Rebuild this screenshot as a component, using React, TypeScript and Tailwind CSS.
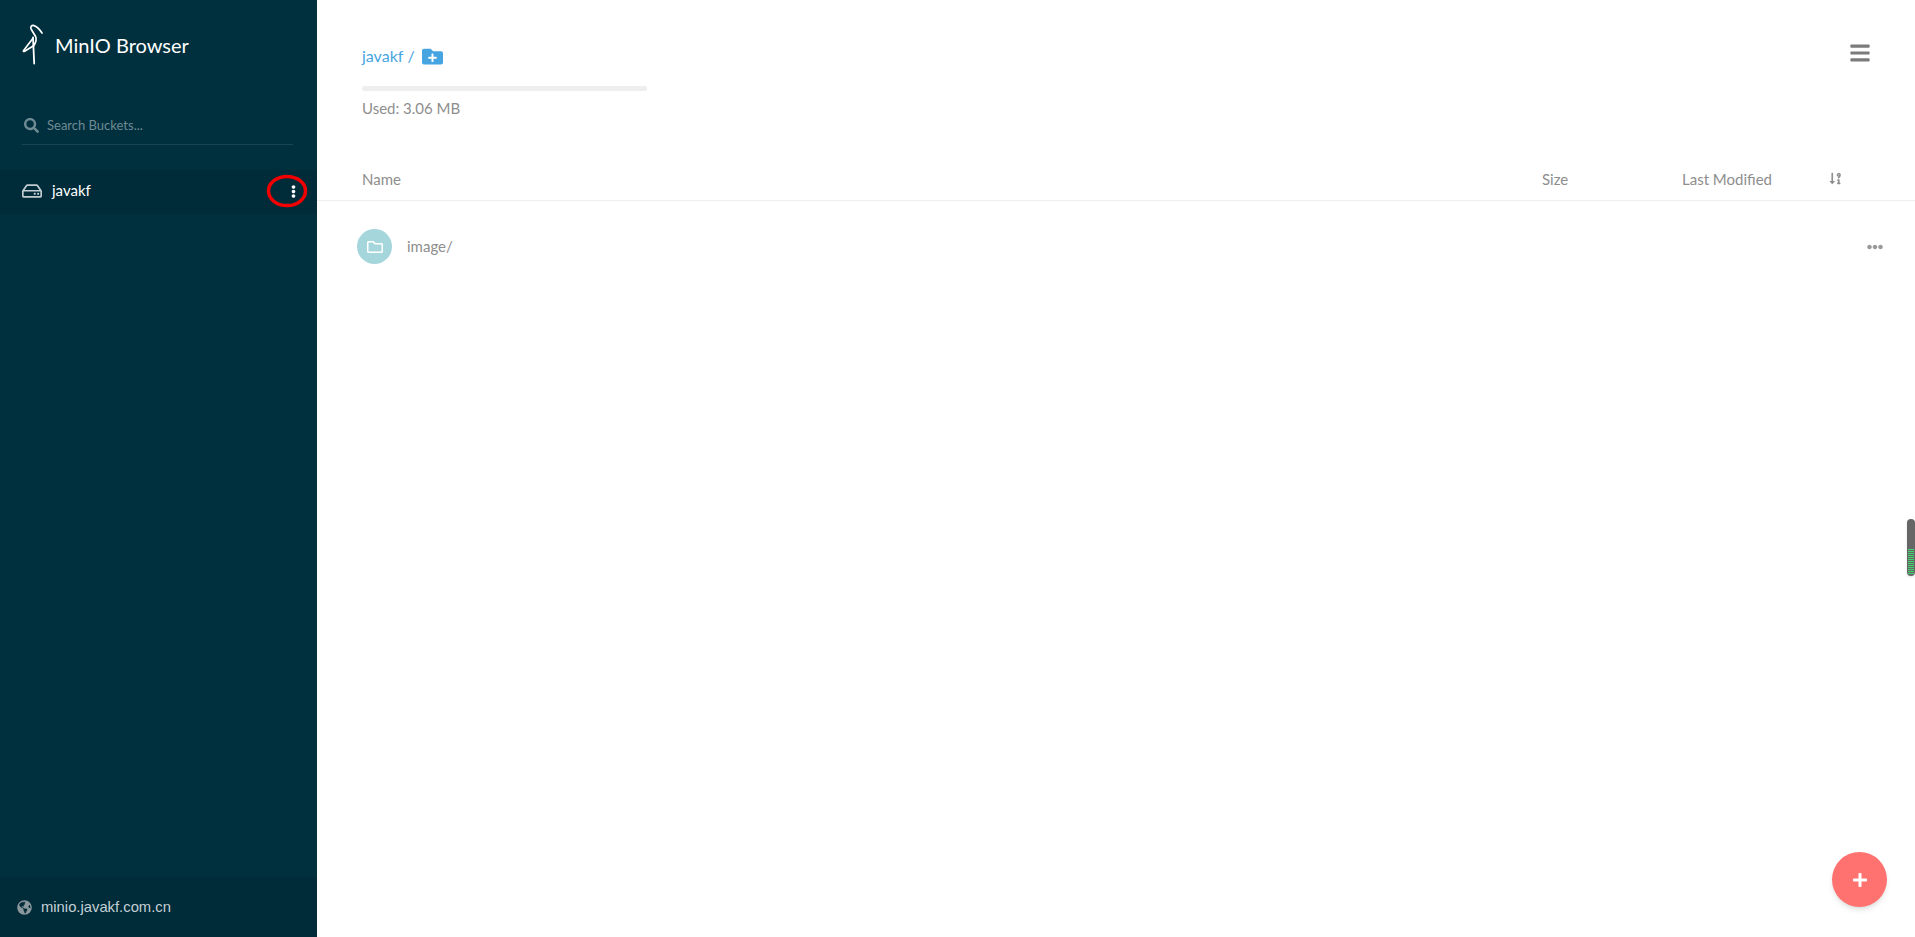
import { FaEllipsisH, FaEllipsisV, FaBars, FaFolderPlus, FaGlobeAmericas, FaPlus, FaRegFolder, FaRegHdd, FaSearch, FaSortNumericDownAlt } from 'react-icons/fa';

function Logo() {
  return (
    <svg viewBox="0 0 22 42" className="w-[22px] h-[42px]" fill="none" stroke="#fff" strokeLinecap="round" strokeLinejoin="round">
      <path d="M20 9 C18 6 15 2.5 12 1.6 C9.5 1 8 3 9.2 5.2 L13.6 12.5 C14.8 15 14.2 18 11.5 22" strokeWidth="1.7" />
      <path d="M11.2 14 L1.6 26.4 C1 27.4 1.6 27.8 2.6 27.2 L11.2 22" strokeWidth="1.7" />
      <path d="M11 13.5 L12.2 39.5" strokeWidth="1.8" />
    </svg>
  );
}

function Sidebar() {
  return (
    <aside className="w-[317px] h-full shrink-0 flex flex-col bg-[#002f3e]">
      <header className="h-[100px] pl-[22px] pt-[24px] flex items-start">
        <Logo />
        <span className="ml-[11px] mt-[8px] text-[20px] leading-[26px] text-white">MinIO Browser</span>
      </header>
      <div className="ml-[22px] mr-[24px] h-[45px] pt-[7px] flex items-center border-b border-[#1c4553]">
        <FaSearch className="ml-[2px] text-[15px] text-[#6f8b94]" />
        <span className="ml-[8px] text-[13px] text-[#6f8b94]">Search Buckets...</span>
      </div>
      <div className="mt-[25px] h-[44px] pl-[22px] pr-[17px] flex items-center bg-[#002b38] text-white">
        <FaRegHdd className="mb-[2px] text-[20px] text-[#c2cdd1]" />
        <span className="ml-[10px] mb-[3px] text-[15px]">javakf</span>
        <FaEllipsisV className="ml-auto mb-[1px] text-[13px] text-white" />
      </div>
      <footer className="mt-auto h-[60px] pl-[17px] flex items-center bg-[#002b38]">
        <FaGlobeAmericas className="text-[15px] text-[#8a979c]" />
        <span className="ml-[9px] text-[14.8px] text-[#c4d0d6] font-['Liberation_Sans',sans-serif]">minio.javakf.com.cn</span>
      </footer>
    </aside>
  );
}

function Main() {
  return (
    <main className="flex-1 h-full bg-white text-[15px] text-[#8e8e8e]">
      <div className="h-[163px] pl-[45px] pr-[44px] flex justify-between">
        <div className="w-[285px] pt-[46px]">
          <div className="flex items-center h-[20px] text-[16px] text-[#46a5e0]">
            <span>javakf</span>
            <span className="ml-[4px]">/</span>
            <FaFolderPlus className="ml-[7px] text-[21px]" />
          </div>
          <div className="mt-[20px] h-[5px] rounded-sm bg-[#eeeeee]"></div>
          <div className="mt-[6px] leading-[22px]">Used: 3.06 MB</div>
        </div>
        <FaBars className="mt-[42px] text-[22px] text-[#7b7b7b]" />
      </div>
      <div className="h-[38px] pl-[45px] flex items-start border-b border-[#eeeeee]">
        <span className="leading-[32px]">Name</span>
        <span className="ml-auto w-[140px] leading-[32px]">Size</span>
        <span className="w-[147px] leading-[32px]">Last Modified</span>
        <FaSortNumericDownAlt className="mt-[9px] mr-[73px] text-[13px]" />
      </div>
      <div className="h-[91px] pl-[40px] pr-[32px] flex items-center">
        <div className="w-[35px] h-[35px] rounded-full bg-[#a5d6dc] flex items-center justify-center">
          <FaRegFolder className="text-[16px] text-white" />
        </div>
        <span className="ml-[15px]">image/</span>
        <FaEllipsisH className="ml-auto text-[16px] text-[#999999]" />
      </div>
    </main>
  );
}

export default function App() {
  return (
    <div className="relative w-full h-screen overflow-hidden flex font-['Lato',sans-serif]">
      <Sidebar />
      <Main />
      {/* annotation drawn over the bucket menu */}
      <svg className="absolute left-[266px] top-[173px] w-[42px] h-[36px]" viewBox="0 0 42 36" fill="none">
        <ellipse cx="21" cy="18" rx="18.5" ry="14.5" stroke="#f00000" strokeWidth="3.5" />
      </svg>
      {/* floating scroll widget at the right edge */}
      <div className="absolute right-0 top-[519px] w-[8px] h-[57px] rounded-full bg-[#666666] shadow flex flex-col items-center justify-end gap-[1px] pb-[2px] overflow-hidden">
        {Array.from({ length: 13 }).map((_, i) => (
          <div key={i} className="w-[6px] h-[1px] shrink-0 bg-[#3fd46e]"></div>
        ))}
      </div>
      <button className="absolute left-[1832px] top-[852px] w-[55px] h-[55px] rounded-full bg-[#ff726f] shadow-md flex items-center justify-center">
        <FaPlus className="text-[16px] text-white" />
      </button>
    </div>
  );
}
